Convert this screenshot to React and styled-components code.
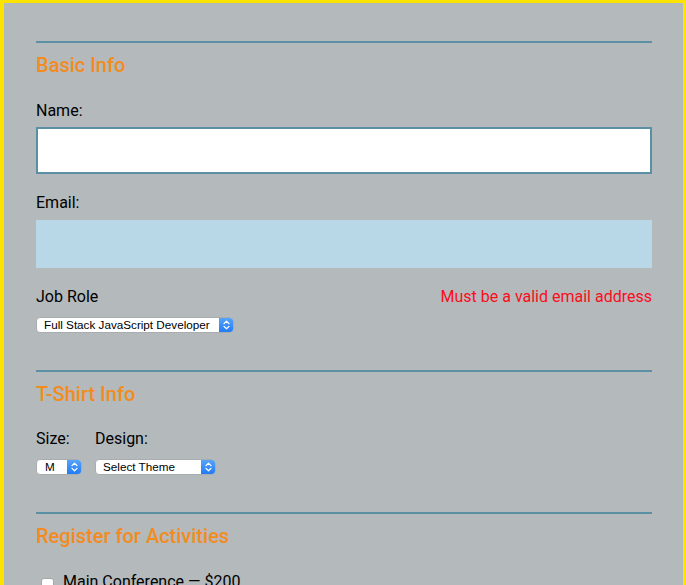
import styled, { createGlobalStyle } from "styled-components"

const GlobalStyle = createGlobalStyle`
    html, body {
        margin: 0;
        padding: 0;
    }
    body {
        font-family: Roboto, "Liberation Sans", sans-serif;
        color: #000;
        overflow: hidden;
    }
`

const Page = styled.form`
    box-sizing: border-box;
    min-height: 585px;
    background: #b4b9bb;
    border-style: solid;
    border-color: #fde400;
    border-width: 3px 3px 0 4px;
    padding: 38px 31px 0 32px;
    display: flex;
    flex-direction: column;
`

const Section = styled.fieldset`
    border: 0;
    margin: 0 0 37px;
    padding: 0;
    border-top: 2px solid #5a8fa4;
    display: flex;
    flex-direction: column;
    min-width: 0;
`

const Legend = styled.h2`
    margin: 10px 0 0;
    font-size: 20px;
    line-height: 24px;
    font-weight: 500;
    color: #f28c1e;
`

const Label = styled.label`
    display: block;
    font-size: 16px;
    line-height: 19px;
    margin-top: ${({$gap}) => $gap ?? 19}px;
`

const TextInput = styled.input`
    box-sizing: border-box;
    display: block;
    width: 100%;
    height: ${({$h}) => $h}px;
    margin-top: ${({$gap}) => $gap}px;
    background: ${({$focus}) => ($focus ? "#fff" : "#b8d8e8")};
    border: ${({$focus}) => ($focus ? "2px solid #5a8fa4" : "0")};
    outline: none;
    padding: 0 8px;
    font: inherit;
`

const LabelRow = styled.div`
    display: flex;
    justify-content: space-between;
    align-items: baseline;
    margin-top: 19px;
    font-size: 16px;
    line-height: 19px;
`

const Error = styled.span`
    color: #fc0d1b;
`

const SelectWrap = styled.div`
    box-sizing: border-box;
    display: flex;
    width: ${({$w}) => $w}px;
    height: 16px;
    margin-top: 11px;
    background: #fff;
    border: 1px solid #a9adb0;
    border-radius: 4px;
    overflow: hidden;
`

const NativeSelect = styled.select`
    flex: 1;
    min-width: 0;
    appearance: none;
    border: 0;
    outline: none;
    background: transparent;
    padding: 0 0 0 ${({$pad}) => $pad ?? 7}px;
    margin: 0;
    font-family: "Liberation Sans", Arial, sans-serif;
    font-size: 11.7px;
    line-height: 14px;
    height: 14px;
    color: #000;
`

const Arrows = styled.span`
    width: 15px;
    flex: none;
    display: flex;
    align-items: center;
    justify-content: center;
    background: linear-gradient(#5aa6fa, #1f79f3);
    margin: -1px -1px -1px 0;
`

const Row = styled.div`
    display: flex;
    gap: 13px;
`

const Col = styled.div`
    display: flex;
    flex-direction: column;
`

const CheckRow = styled.label`
    display: flex;
    align-items: center;
    gap: 9px;
    margin-top: 23px;
    padding-left: 5px;
    font-size: 16px;
    line-height: 19px;
`

const Box = styled.span`
    width: 13px;
    height: 13px;
    margin-top: 7px;
    box-sizing: border-box;
    background: #fff;
    border: 1px solid #a7a7a7;
    border-radius: 3px;
`

const Chevrons = () => (
    <svg width="7" height="10" viewBox="0 0 7 10" fill="none" stroke="#fff" strokeWidth="1.3" strokeLinecap="round" strokeLinejoin="round">
        <path d="M1 3.6 L3.5 1.2 L6 3.6" />
        <path d="M1 6.4 L3.5 8.8 L6 6.4" />
    </svg>
)

const Select = ({width, pad, children}) => (
    <SelectWrap $w={width}>
        <NativeSelect $pad={pad}>{children}</NativeSelect>
        <Arrows>
            <Chevrons />
        </Arrows>
    </SelectWrap>
)

const App = () => {
    return (
        <>
            <GlobalStyle />
            <Page>
                <Section>
                    <Legend>Basic Info</Legend>
                    <Label $gap={24} htmlFor="name">Name:</Label>
                    <TextInput id="name" $focus $h={47} $gap={7} />
                    <Label htmlFor="mail">Email:</Label>
                    <TextInput id="mail" $h={48} $gap={8} />
                    <LabelRow>
                        <span>Job Role</span>
                        <Error>Must be a valid email address</Error>
                    </LabelRow>
                    <Select width={198}>
                        <option>Full Stack JavaScript Developer</option>
                    </Select>
                </Section>

                <Section>
                    <Legend>T-Shirt Info</Legend>
                    <Row>
                        <Col>
                            <Label $gap={23}>Size:</Label>
                            <Select width={46} pad={8}>
                                <option>M</option>
                            </Select>
                        </Col>
                        <Col>
                            <Label $gap={23}>Design:</Label>
                            <Select width={121}>
                                <option>Select Theme</option>
                            </Select>
                        </Col>
                    </Row>
                </Section>

                <Section>
                    <Legend>Register for Activities</Legend>
                    <CheckRow>
                        <Box />
                        <span>Main Conference — $200</span>
                    </CheckRow>
                </Section>
            </Page>
        </>
    )
}

export default App
